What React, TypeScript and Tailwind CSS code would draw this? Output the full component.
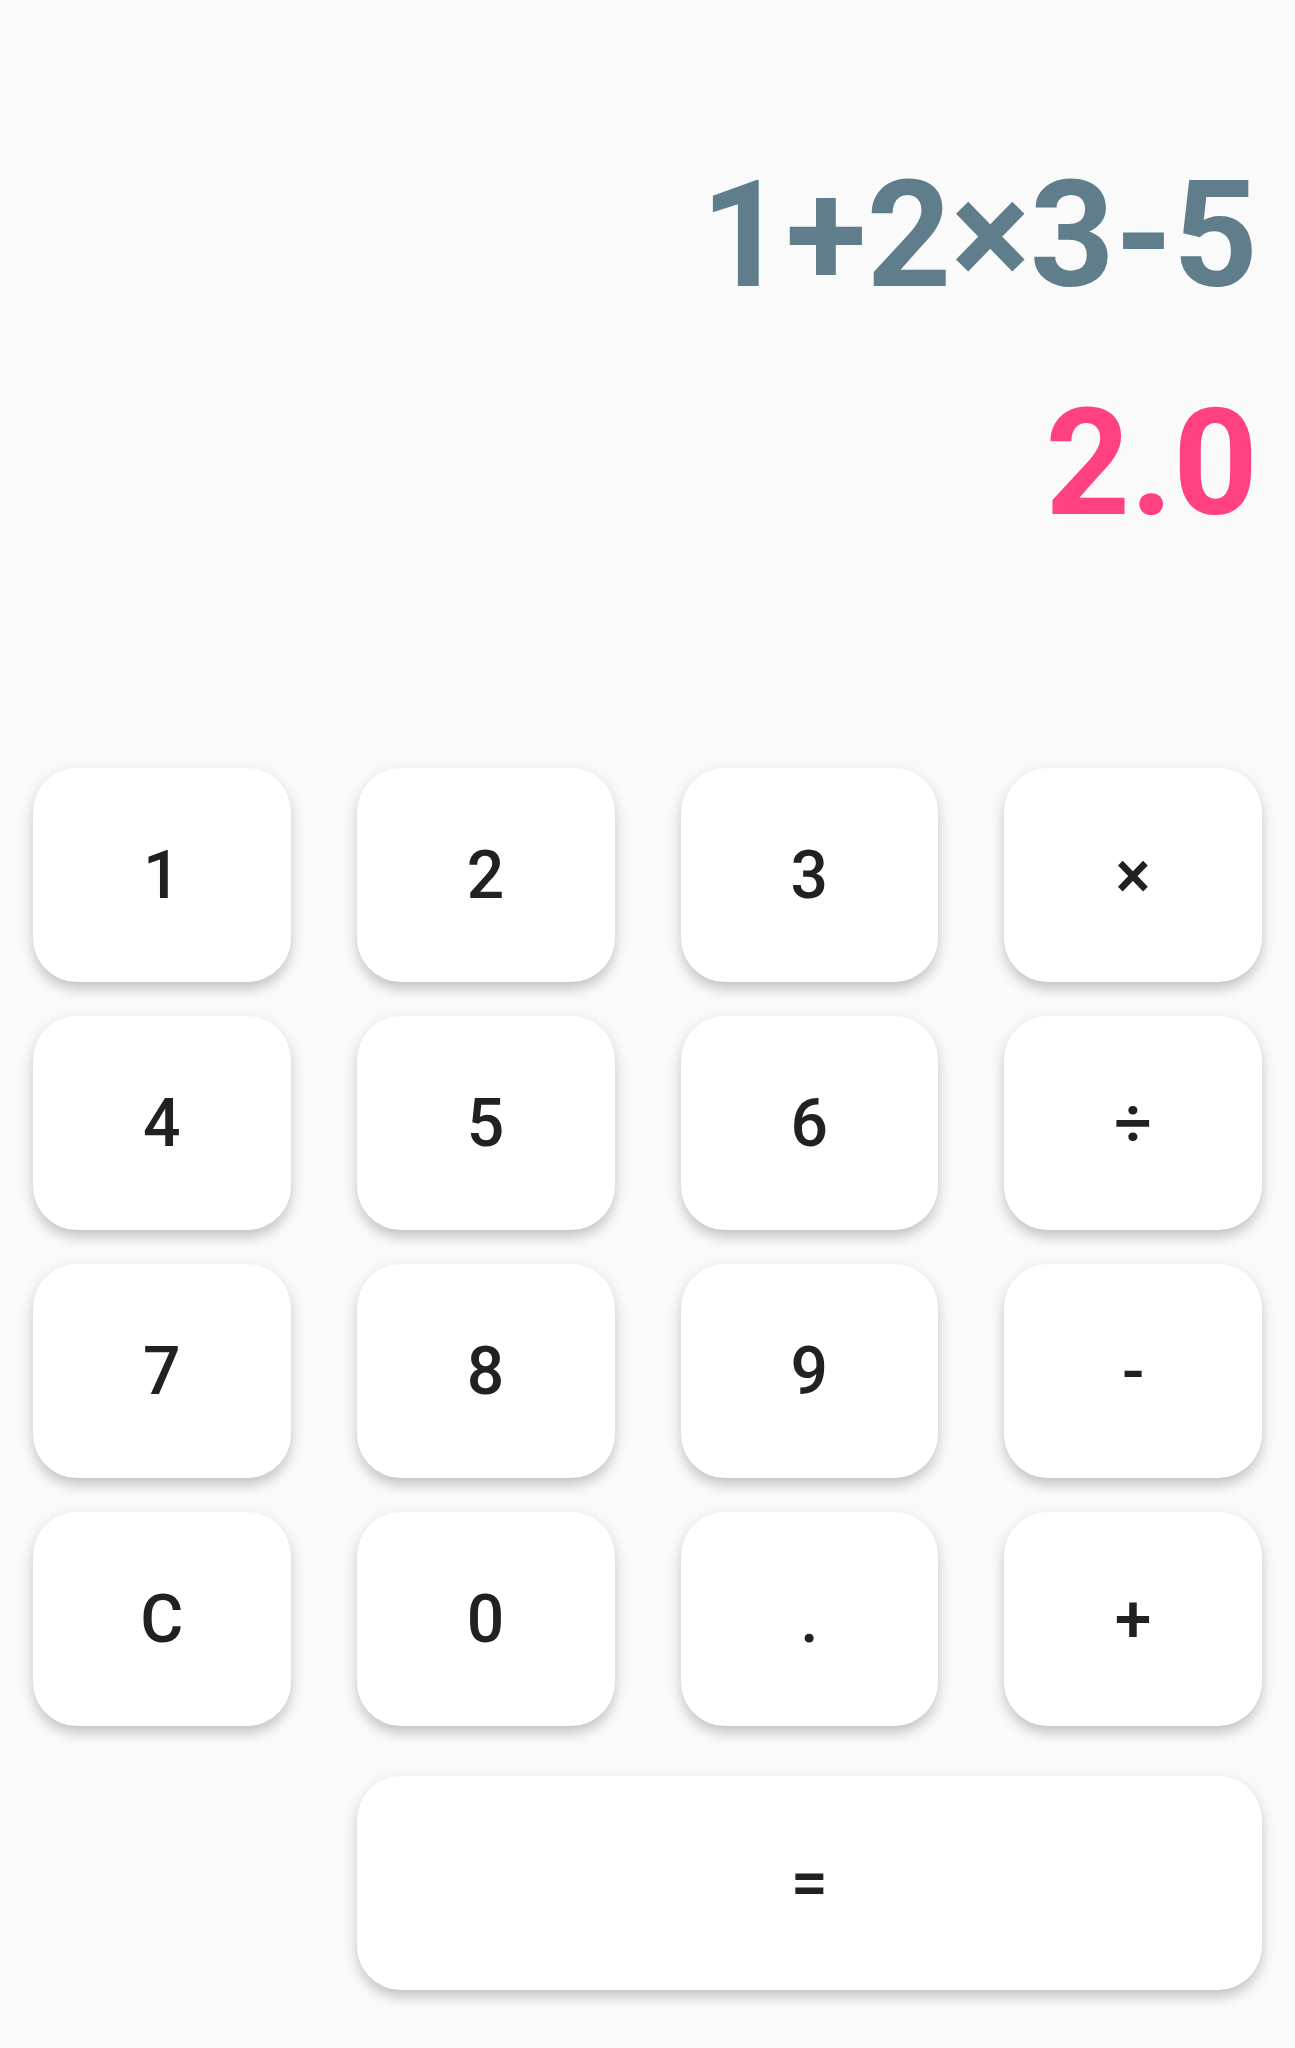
const keys = [
  "1", "2", "3", "×",
  "4", "5", "6", "÷",
  "7", "8", "9", "-",
  "C", "0", ".", "+",
]

const Key = ({ label, wide }: { label: string; wide?: boolean }) => (
  <button
    className={
      wide
        ? "col-start-2 col-span-3 mt-4 h-[214px] rounded-[44px] bg-white text-[66px] font-medium text-[#212121] shadow-[0_8px_14px_-2px_rgba(0,0,0,0.2),0_3px_18px_rgba(0,0,0,0.07)] flex items-center justify-center"
        : "h-[214px] rounded-[44px] bg-white text-[66px] font-medium text-[#212121] shadow-[0_8px_14px_-2px_rgba(0,0,0,0.2),0_3px_18px_rgba(0,0,0,0.07)] flex items-center justify-center"
    }
  >
    {label}
  </button>
)

export default function App() {
  return (
    <div className="w-[1295px] h-[2048px] bg-[#fafafa] font-['Roboto',sans-serif] overflow-hidden">
      <div className="h-[768px] flex flex-col items-end pt-[162px] pr-[37px] gap-[80px]">
        <div className="text-[148px] leading-none font-bold text-[#607d8b] whitespace-nowrap">
          1+2×3-5
        </div>
        <div className="text-[148px] leading-none font-bold text-[#ff4081] whitespace-nowrap">
          2.0
        </div>
      </div>
      <div className="grid grid-cols-4 gap-x-[66px] gap-y-[34px] px-[33px]">
        {keys.map((k) => (
          <Key key={k} label={k} />
        ))}
        <Key label="=" wide />
      </div>
    </div>
  )
}
